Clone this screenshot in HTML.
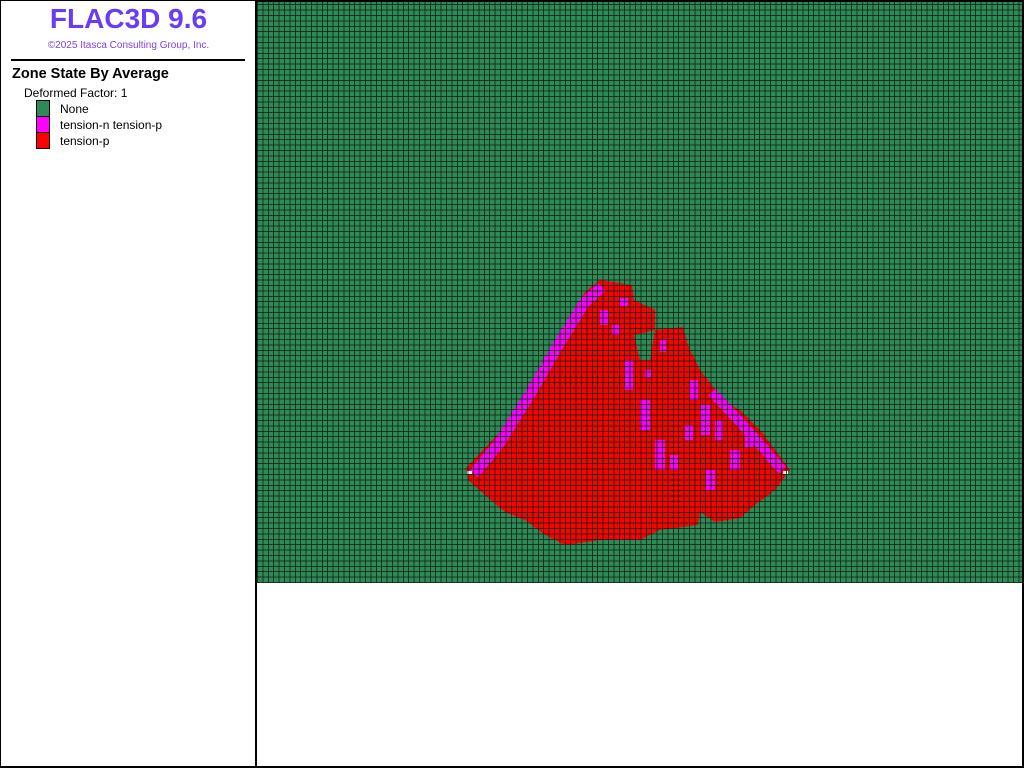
<!DOCTYPE html>
<html><head><style>
body{margin:0;width:1024px;height:768px;background:#fff;position:relative;overflow:hidden;font-family:"Liberation Sans",sans-serif}
#left{position:absolute;left:0;top:0;box-sizing:border-box;width:257px;height:768px;border:1px solid #000;border-right:2px solid #000;border-bottom:2px solid #000}
#right{position:absolute;left:255px;top:0;width:769px;height:768px;border:2px solid #000;border-left:none;box-sizing:border-box}
#plot{position:absolute;left:257px;top:2px;width:765px;height:581px;background:#2e8b57}
#grid{position:absolute;left:257px;top:2px;width:765px;height:581px;
background-image:repeating-linear-gradient(90deg,rgba(15,35,20,.8) 0 1px,transparent 1px 5.4px),repeating-linear-gradient(0deg,rgba(15,35,20,.8) 0 1px,transparent 1px 5.4px)}
.t{position:absolute;left:0;width:257px;text-align:center}
</style></head><body>
<div id="left"></div><div id="right"></div>
<div class="t" style="top:3px;font-size:28px;font-weight:bold;color:#6a3cf2">FLAC3D 9.6</div>
<div class="t" style="top:40px;font-size:10px;color:#8040e0">©2025 Itasca Consulting Group, Inc.</div>
<div style="position:absolute;left:11px;top:59px;width:234px;height:2px;background:#000"></div>
<div style="position:absolute;left:12px;top:66px;font-size:14.5px;font-weight:bold">Zone State By Average</div>
<div style="position:absolute;left:24px;top:86px;font-size:12px">Deformed Factor: 1</div>
<div style="position:absolute;left:36px;top:100px;width:12px;height:15px;background:#2e8b57;border:1px solid #000"></div>
<div style="position:absolute;left:36px;top:116px;width:12px;height:15px;background:#f0f;border:1px solid #000"></div>
<div style="position:absolute;left:36px;top:132px;width:12px;height:15px;background:#f00;border:1px solid #000"></div>
<div style="position:absolute;left:60px;top:102px;font-size:12px">None</div>
<div style="position:absolute;left:60px;top:118px;font-size:12px">tension-n tension-p</div>
<div style="position:absolute;left:60px;top:134px;font-size:12px">tension-p</div>
<div id="plot"></div>
<svg style="position:absolute;left:0;top:0" width="1024" height="768">
<polygon fill="#f00" points="466,468 500,432 530,385 560,335 585,292 600,280 632,285 634,300 655,310 655,330 683,327 688,345 700,370 712,385 722,400 740,410 762,432 790,470 775,490 755,505 740,518 715,522 700,512 698,525 660,530 640,540 600,540 565,545 545,535 525,520 505,512 485,495 468,480"/>
<polygon fill="#2e8b57" points="634,335 655,330 650,360 640,360"/>
<polyline fill="none" stroke="#f0f" stroke-width="11" points="474,474 500,442 530,394 560,342 585,302 602,287"/>
<polyline fill="none" stroke="#f0f" stroke-width="10" points="712,392 740,422 765,450 782,470"/>
<g fill="#f0f">
<rect x="600" y="310" width="8" height="15"/><rect x="612" y="325" width="8" height="10"/><rect x="625" y="360" width="8" height="30"/><rect x="640" y="400" width="10" height="30"/>
<rect x="655" y="440" width="10" height="30"/><rect x="690" y="380" width="8" height="20"/><rect x="700" y="405" width="10" height="30"/><rect x="715" y="420" width="8" height="20"/>
<rect x="730" y="450" width="10" height="20"/><rect x="705" y="470" width="10" height="20"/><rect x="670" y="455" width="8" height="15"/><rect x="660" y="340" width="6" height="12"/>
<rect x="620" y="298" width="8" height="8"/><rect x="685" y="425" width="8" height="15"/><rect x="745" y="430" width="8" height="18"/><rect x="645" y="370" width="6" height="8"/>
</g>
<rect x="467" y="471" width="5" height="3" fill="#fff"/><rect x="783" y="471" width="5" height="3" fill="#fff"/>
</svg>
<div id="grid"></div>
</body></html>
